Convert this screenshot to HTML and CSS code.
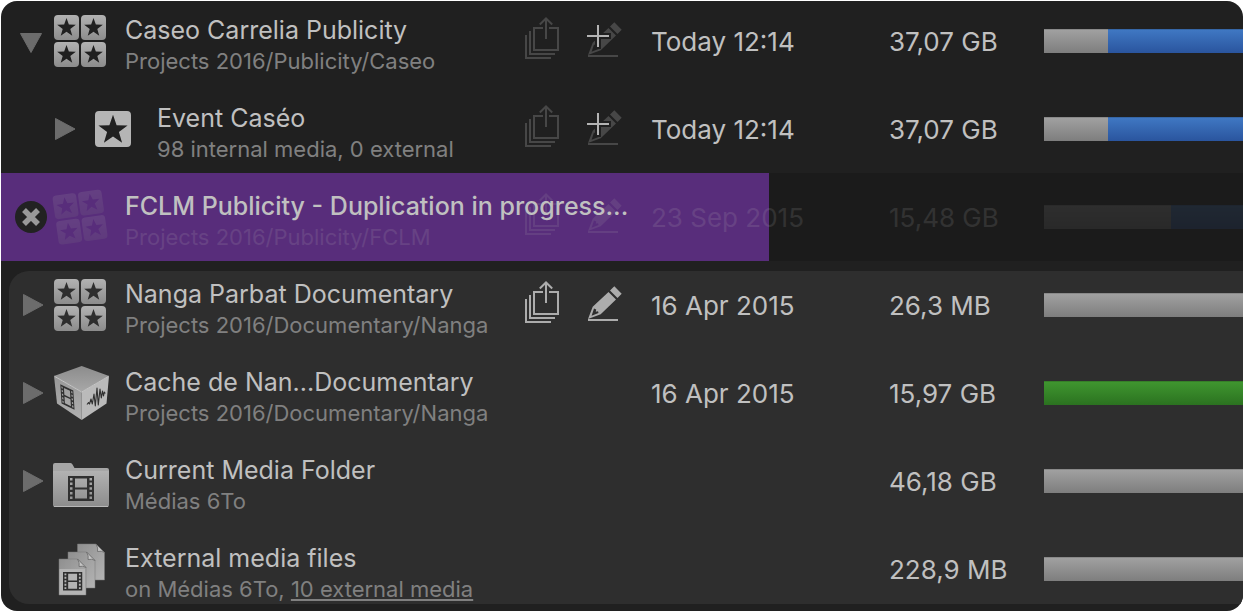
FILE: index.html
```html
<!DOCTYPE html>
<html lang="en">
<head>
<meta charset="utf-8">
<meta name="viewport" content="width=device-width, initial-scale=1">
<title>Projects</title>
<link rel="stylesheet" href="styles.css">
</head>
<body>
<svg class="defs" aria-hidden="true">
  <defs>
    <linearGradient id="metal" x1="0" y1="0" x2="0" y2="1"><stop offset="0" stop-color="#b2b2b2"/><stop offset="1" stop-color="#8c8c8c"/></linearGradient>
    <linearGradient id="cube-top" x1="0" y1="0" x2="0" y2="1"><stop offset="0" stop-color="#8c8c8c"/><stop offset="1" stop-color="#a8a8a8"/></linearGradient>
    <linearGradient id="cube-left" x1="0" y1="0" x2="0" y2="1"><stop offset="0" stop-color="#989898"/><stop offset="1" stop-color="#b0b0b0"/></linearGradient>
    <linearGradient id="page" x1="0" y1="0" x2="1" y2="1"><stop offset="0" stop-color="#8f8f8f"/><stop offset="1" stop-color="#b4b4b4"/></linearGradient>
    <symbol id="tri-right" viewBox="0 0 24 24"><path d="M3.500 1.500L23 12 3.500 22.500z" fill="#6c6c6c" stroke="#6c6c6c" stroke-linejoin="round"/></symbol>
    <symbol id="tri-down" viewBox="0 0 24 24"><path d="M.5 4.500H21.500L11 23.500z" fill="#6c6c6c" stroke="#6c6c6c" stroke-linejoin="round"/></symbol>
    <path id="tile" fill="url(#metal)" fill-rule="evenodd" d="M4 0H21a4 4 0 0 1 4 4V21a4 4 0 0 1-4 4H4a4 4 0 0 1-4-4V4a4 4 0 0 1 4-4zM12.500 3l2.350 6.560 6.970.21-5.520 4.270 1.960 6.690-5.760-3.930-5.760 3.930 1.960-6.690L3.180 9.770l6.970-.21z"/>
    <symbol id="library" viewBox="0 0 56 54"><use href="#tile" x="1" y="1"/><use href="#tile" x="28" y="1"/><use href="#tile" x="1" y="28"/><use href="#tile" x="28" y="28"/></symbol>
    <symbol id="event" viewBox="0 0 56 54"><path transform="translate(10 9)" fill="#b5b5b5" fill-rule="evenodd" d="M4 0H32a4 4 0 0 1 4 4V32a4 4 0 0 1-4 4H4a4 4 0 0 1-4-4V4a4 4 0 0 1 4-4zM18 3.800L14.400 14.200 3.400 14.400 12.100 21.100 8.900 31.700 18 25.400 27.100 31.700 23.900 21.100 32.600 14.400 21.600 14.200z"/></symbol>
    <path id="film" fill="#303030" fill-rule="evenodd" d="M0 0H26V25H0zM7 2.500V11.500H19V2.500zM7 13.500V22.500H19V13.500zM2 2V4.500H4.500V2zM2 6.500V9H4.500V6.500zM2 11.200V13.700H4.500V11.200zM2 16V18.500H4.500V16zM2 20.500V23H4.500V20.500zM21.500 2V4.500H24V2zM21.500 6.500V9H24V6.500zM21.500 11.200V13.700H24V11.200zM21.500 16V18.500H24V16zM21.500 20.500V23H24V20.500z"/>
    <symbol id="cube" viewBox="0 0 56 54">
      <path d="M28.700 0L56 10 28.700 26 1 10z" fill="url(#cube-top)"/>
      <path d="M1 10L28.700 26V54L4 37.500z" fill="url(#cube-left)"/>
      <path d="M56 10L28.700 26V54L53.500 37.500z" fill="#bababa"/>
      <path d="M1.500 10.300L28.700 26 55.500 10.300" fill="none" stroke="#c6c6c6"/>
      <use href="#film" transform="matrix(.5 .24 .05 .77 7.300 18.300)"/>
      <path d="M34 38.500l1.500-2 1 1.500 1.500-5 1.300 5 1.700-10 1.300 12 1.700-18 1.300 17 1.700-16 1.300 9 1.200-7 1 5 .8-4 1 1.500" fill="none" stroke="#303030" stroke-width="1.100" stroke-linejoin="round"/>
    </symbol>
    <symbol id="folder" viewBox="0 0 56 54">
      <path d="M0 11a2 2 0 0 1 2-2H17.500q1.500 0 2 1.500L21.500 14H54a2 2 0 0 1 2 2V20H0z" fill="#a6a6a6"/>
      <path d="M0 17H56V51a2 2 0 0 1-2 2H2a2 2 0 0 1-2-2z" fill="url(#metal)"/>
      <path d="M1 52.500H55" stroke="#b8b8b8"/>
      <use href="#film" x="15" y="22"/>
    </symbol>
    <g id="sheet"><path d="M0 0H18.500L27 8.500V36H0z" fill="url(#page)" stroke="#777" stroke-width=".5"/><path d="M18.500 0Q21 4 20 7.500 24 6.500 27 8.500z" fill="#c4c4c4" stroke="#6a6a6a" stroke-width=".8"/></g>
    <symbol id="files" viewBox="0 0 56 54">
      <use href="#sheet" x="24.500" y="2"/><use href="#sheet" x="15" y="10"/><use href="#sheet" x="6" y="17"/>
      <path d="M6.500 27H32V52.500H6.500z" fill="#b4b4b4"/>
      <use href="#film" transform="translate(10 30) scale(.74)"/>
    </symbol>
    <symbol id="share" viewBox="0 0 36 54"><path fill="none" stroke="currentColor" stroke-width="2" d="M1 21V44H26M5 17V40H30M18 14H9V36H33V14H24M21 25V5M14.800 10.500L21 4.500 27.200 10.500"/></symbol>
    <symbol id="pencil" viewBox="0 0 36 54"><path fill="currentColor" fill-rule="evenodd" d="M27.300 8.300L34.700 15.700 30.500 20 23 12.500zM21.500 14L29 21.500 13.700 36.300 1 41 5.700 28.700zM7 30.500L4.600 37.700 11.500 35 11 33.300 8.800 33.800 9.200 31.500zM1 41H31V43H1z"/></symbol>
    <symbol id="pencil-add" viewBox="0 0 36 54"><use href="#pencil" width="36" height="54"/><path d="M0 22H24M11 10V35" stroke="#202020" stroke-width="6"/><path d="M0 22H22M11 11V33" stroke="#b4b4b4" stroke-width="2"/></symbol>
    <symbol id="cancel" viewBox="0 0 32 32"><circle cx="16" cy="16" r="16" fill="#222"/><path d="M9 9L23 23M23 9L9 23" stroke="#999" stroke-width="5.500"/></symbol>
  </defs>
</svg>
<main class="window">
  <table class="browser">
    <tbody class="section">
      <tr class="row">
        <td class="name">
          <button class="toggle" aria-label="Collapse"><svg class="toggle-icon"><use href="#tri-down"/></svg></button>
          <svg class="item-icon"><use href="#library"/></svg>
          <div class="label"><div class="title">Caseo Carrelia Publicity</div><div class="path">Projects 2016/Publicity/Caseo</div></div>
        </td>
        <td><button class="action dim" aria-label="Share"><svg class="action-icon"><use href="#share"/></svg></button></td>
        <td><button class="action dim" aria-label="Add note"><svg class="action-icon"><use href="#pencil-add"/></svg></button></td>
        <td class="value">Today 12:14</td>
        <td class="value">37,07 GB</td>
        <td><div class="bar"><span class="part gray" style="width:32%"></span><span class="part blue" style="width:68%"></span></div></td>
      </tr>
      <tr class="row">
        <td class="name child">
          <button class="toggle" aria-label="Expand"><svg class="toggle-icon"><use href="#tri-right"/></svg></button>
          <svg class="item-icon"><use href="#event"/></svg>
          <div class="label"><div class="title">Event Caséo</div><div class="path">98 internal media, 0 external</div></div>
        </td>
        <td><button class="action dim" aria-label="Share"><svg class="action-icon"><use href="#share"/></svg></button></td>
        <td><button class="action dim" aria-label="Add note"><svg class="action-icon"><use href="#pencil-add"/></svg></button></td>
        <td class="value">Today 12:14</td>
        <td class="value">37,07 GB</td>
        <td><div class="bar"><span class="part gray" style="width:32%"></span><span class="part blue" style="width:68%"></span></div></td>
      </tr>
    </tbody>
    <tbody class="busy">
      <tr class="row">
        <td class="name">
          <button class="cancel" aria-label="Cancel duplication"><svg class="cancel-icon"><use href="#cancel"/></svg></button>
          <svg class="item-icon tilted faded"><use href="#library"/></svg>
          <div class="label"><div class="title strong">FCLM Publicity - Duplication in progress...</div><div class="path faded">Projects 2016/Publicity/FCLM</div></div>
        </td>
        <td class="faded"><button class="action" aria-label="Share" disabled><svg class="action-icon"><use href="#share"/></svg></button></td>
        <td class="faded"><button class="action" aria-label="Edit note" disabled><svg class="action-icon"><use href="#pencil"/></svg></button></td>
        <td class="value faded">23 Sep 2015</td>
        <td class="value faded">15,48 GB</td>
        <td class="faded"><div class="bar"><span class="part gray" style="width:64%"></span><span class="part blue" style="width:36%"></span></div></td>
      </tr>
    </tbody>
    <tbody class="section group">
      <tr class="row">
        <td class="name">
          <button class="toggle" aria-label="Expand"><svg class="toggle-icon"><use href="#tri-right"/></svg></button>
          <svg class="item-icon"><use href="#library"/></svg>
          <div class="label"><div class="title">Nanga Parbat Documentary</div><div class="path">Projects 2016/Documentary/Nanga</div></div>
        </td>
        <td><button class="action" aria-label="Share"><svg class="action-icon"><use href="#share"/></svg></button></td>
        <td><button class="action" aria-label="Edit note"><svg class="action-icon"><use href="#pencil"/></svg></button></td>
        <td class="value">16 Apr 2015</td>
        <td class="value">26,3 MB</td>
        <td><div class="bar"><span class="part gray" style="width:100%"></span></div></td>
      </tr>
      <tr class="row">
        <td class="name">
          <button class="toggle" aria-label="Expand"><svg class="toggle-icon"><use href="#tri-right"/></svg></button>
          <svg class="item-icon"><use href="#cube"/></svg>
          <div class="label"><div class="title">Cache de Nan...Documentary</div><div class="path">Projects 2016/Documentary/Nanga</div></div>
        </td>
        <td></td>
        <td></td>
        <td class="value">16 Apr 2015</td>
        <td class="value">15,97 GB</td>
        <td><div class="bar"><span class="part green" style="width:100%"></span></div></td>
      </tr>
      <tr class="row">
        <td class="name">
          <button class="toggle" aria-label="Expand"><svg class="toggle-icon"><use href="#tri-right"/></svg></button>
          <svg class="item-icon"><use href="#folder"/></svg>
          <div class="label"><div class="title">Current Media Folder</div><div class="path">Médias 6To</div></div>
        </td>
        <td></td>
        <td></td>
        <td></td>
        <td class="value">46,18 GB</td>
        <td><div class="bar"><span class="part gray" style="width:100%"></span></div></td>
      </tr>
      <tr class="row">
        <td class="name">
          <span class="toggle"></span>
          <svg class="item-icon"><use href="#files"/></svg>
          <div class="label"><div class="title">External media files</div><div class="path">on Médias 6To, <a class="link" href="#external">10 external media</a></div></div>
        </td>
        <td></td>
        <td></td>
        <td></td>
        <td class="value">228,9 MB</td>
        <td><div class="bar"><span class="part gray" style="width:100%"></span></div></td>
      </tr>
    </tbody>
  </table>
</main>
</body>
</html>
```
FILE: styles.css
```css
* { box-sizing: border-box; }

body {
  margin: 0;
  padding: 1px;
  background: #fff;
  color: #c0c0c0;
  font: 26px/32px Inter, "Liberation Sans", sans-serif;
}

.defs {
  position: absolute;
  width: 0;
  height: 0;
}

.window {
  overflow: hidden;
  padding-bottom: 7px;
  border-radius: 16px;
  background: #202020;
}

.browser { display: block; }

.section {
  display: flex;
  flex-direction: column;
  gap: 26px;
  padding: 13px 0 9px;
}

.row {
  --name-width: 524px;
  display: grid;
  grid-template-columns: var(--name-width) 62px 64px 238px 155px minmax(0, 1fr);
  align-items: start;
}

.row > td {
  display: flex;
  align-items: center;
  height: 54px;
  padding: 0;
  white-space: nowrap;
}

.row > .value { padding-top: 2px; }

.row > .name {
  align-items: flex-start;
  height: auto;
  padding-left: 19px;
}

.row > .child { padding-left: 51px; }

.group {
  margin: 10px 0 0 8px;
  padding: 7px 0 0;
  border-radius: 20px 0 0 20px;
  background: #2e2e2e;
}

.group .row { --name-width: 516px; }
.group .name { padding-left: 11px; }

.busy {
  display: block;
  padding: 17px 0 9px;
  background: linear-gradient(90deg, #582d7b 61.800%, #1b1b1b 61.800%);
}

.busy .name {
  position: relative;
  z-index: 1;
  padding-left: 14px;
}

.faded { opacity: 0.14; }

button {
  padding: 0;
  border: 0;
  background: none;
  color: inherit;
}

.toggle {
  display: flex;
  align-items: center;
  flex: none;
  width: 24px;
  height: 54px;
  margin-right: 9px;
}

.toggle-icon {
  width: 24px;
  height: 24px;
}

.cancel {
  display: flex;
  align-items: center;
  flex: none;
  height: 54px;
  margin-right: 6px;
}

.cancel-icon {
  width: 32px;
  height: 32px;
}

.item-icon {
  flex: none;
  width: 56px;
  height: 54px;
  margin-right: 16px;
}

.tilted {
  overflow: visible;
  transform: rotate(-8deg) scale(0.95);
}

.title {
  font-size: 25px;
  line-height: 33px;
}

.strong { font-weight: 500; }

.path {
  color: #808080;
  font-size: 22px;
  line-height: 29px;
}

.busy .path { color: #c0c0c0; }

.link {
  color: inherit;
  text-decoration: underline;
}

.action {
  display: block;
  color: #acacac;
}

.dim { color: #474747; }

.action-icon {
  display: block;
  width: 36px;
  height: 54px;
}

.bar {
  display: flex;
  flex: 1;
  height: 24px;
}

.part { box-shadow: inset 0 1px rgba(0, 0, 0, 0.15); }
.gray { background: linear-gradient(#a2a2a2, #7e7e7e); }
.blue { background: linear-gradient(#4079c4, #2a559e); }
.green { background: linear-gradient(#409730, #2b7220); }
```
